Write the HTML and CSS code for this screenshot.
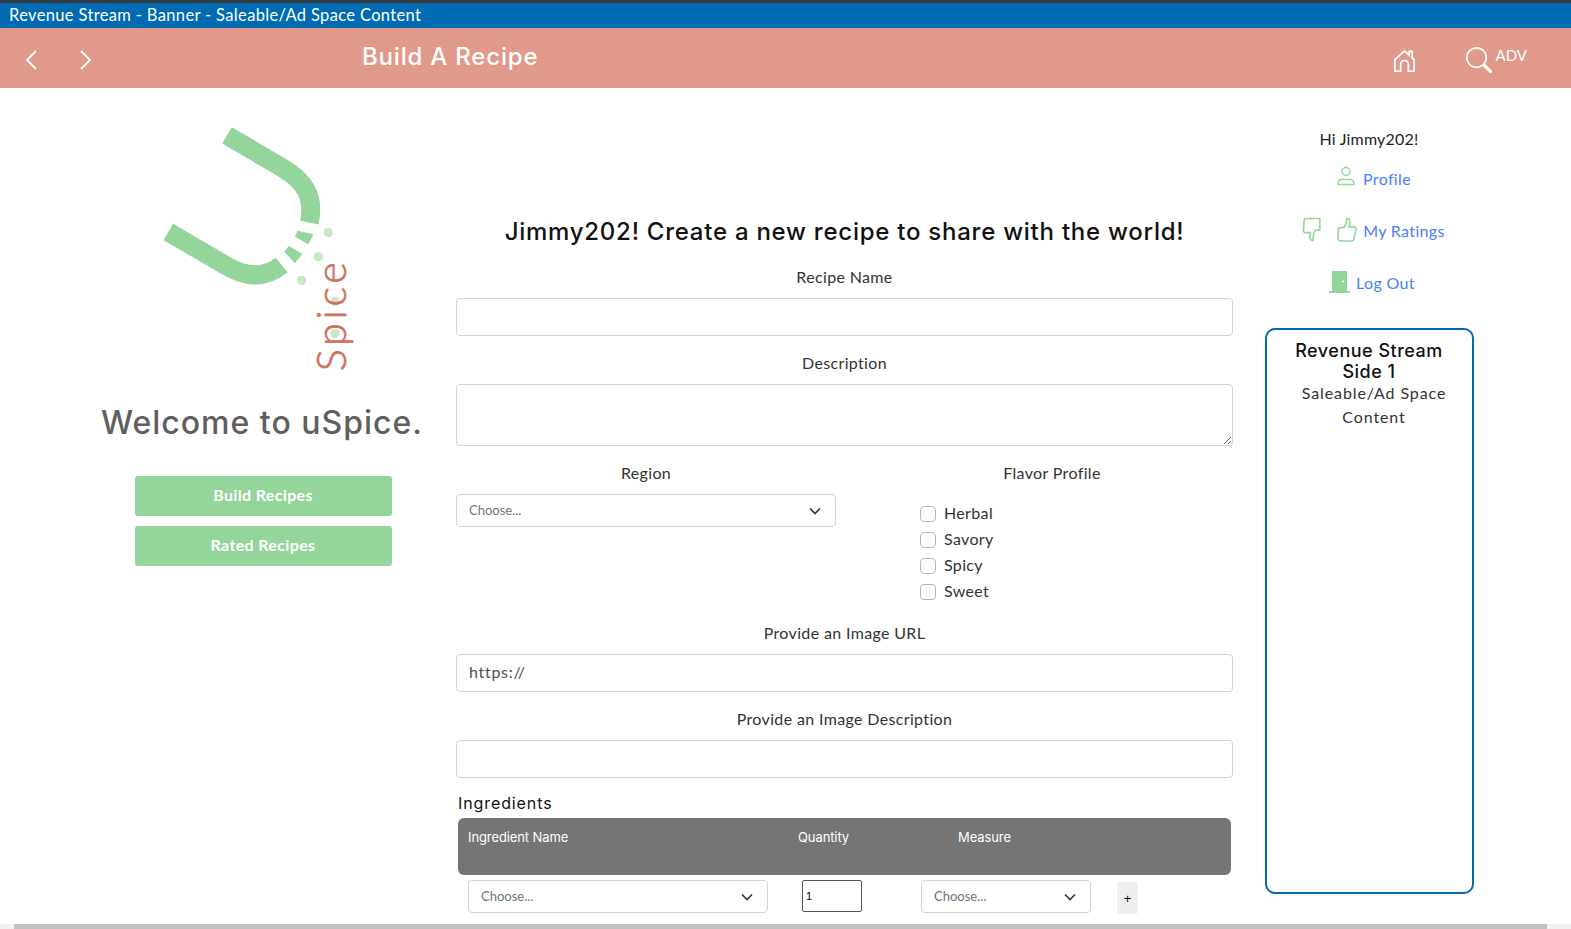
FILE: index.html
```html
<!DOCTYPE html>
<html>
<head>
    <title>Build A Recipe</title>
    <link rel="stylesheet" href="styles.css">
</head>
<body>
    <div class="app">
        <div class="banner">Revenue Stream - Banner - Saleable/Ad Space Content</div>
        <header class="topbar">
            <div class="nav-arrows">
                <svg class="icon-arrow" viewBox="0 0 16 24"><path d="M12 3 3 12l9 9"/></svg>
                <svg class="icon-arrow" viewBox="0 0 16 24"><path d="M4 3l9 9-9 9"/></svg>
            </div>
            <div class="page-title">Build A Recipe</div>
            <svg class="icon-home" viewBox="0 0 24 26"><path d="M2 24V12L12 3l5 4.500V3.500h3v7L22 12v12h-6v-7a4 4 0 0 0-8 0v7z"/></svg>
            <svg class="icon-search" viewBox="0 0 16 16"><path d="M11.742 10.344a6.500 6.500 0 1 0-1.397 1.398h-.001c.03.04.062.078.098.115l3.850 3.850a1 1 0 0 0 1.415-1.414l-3.850-3.850a1.007 1.007 0 0 0-.115-.1zM12 6.500a5.500 5.500 0 1 1-11 0 5.500 5.500 0 0 1 11 0z"/></svg>
            <span class="adv">ADV</span>
        </header>

        <main class="content">
            <section class="left-col">
                <svg class="logo" viewBox="0 0 720 840">
                    <path class="logo-arm" d="M261 76 430 175C490 212 525 255 508 338"/>
                    <path class="logo-arm" d="M85 366 250 462C310 500 370 510 425 465"/>
                    <polygon class="logo-bit" points="472,362 520,373 505,403 465,380"/>
                    <polygon class="logo-bit" points="447,408 487,432 465,460 433,425"/>
                    <circle class="logo-dot" cx="565" cy="368" r="14"/>
                    <circle class="logo-dot" cx="535" cy="440" r="14"/>
                    <circle class="logo-dot" cx="485" cy="511" r="14"/>
                    <circle class="logo-dot" cx="585" cy="574" r="14"/>
                    <circle class="logo-dot" cx="585" cy="670" r="14"/>
                    <text class="logo-text" transform="translate(618 784) rotate(-90)" textLength="328" lengthAdjust="spacing">Spice</text>
                </svg>
                <h2 class="welcome">Welcome to uSpice.</h2>
                <a class="side-btn first">Build Recipes</a>
                <a class="side-btn">Rated Recipes</a>
            </section>

            <section class="form-col">
                <h1 class="form-title">Jimmy202! Create a new recipe to share with the world!</h1>
                <label class="field-label">Recipe Name</label>
                <input class="text-input" type="text">
                <label class="field-label after-input">Description</label>
                <textarea class="text-input text-area"></textarea>

                <div class="split">
                    <div>
                        <label class="field-label">Region</label>
                        <div class="select-box">
                            <select><option>Choose...</option></select>
                            <svg class="chevron" viewBox="0 0 16 16"><path d="M3 5.500l5 5 5-5"/></svg>
                        </div>
                    </div>
                    <div>
                        <label class="field-label">Flavor Profile</label>
                        <div class="checks">
                            <label class="check"><input type="checkbox">Herbal</label>
                            <label class="check"><input type="checkbox">Savory</label>
                            <label class="check"><input type="checkbox">Spicy</label>
                            <label class="check"><input type="checkbox">Sweet</label>
                        </div>
                    </div>
                </div>

                <label class="field-label image-label">Provide an Image URL</label>
                <input class="text-input" type="text" value="https://">
                <label class="field-label after-input">Provide an Image Description</label>
                <input class="text-input" type="text">

                <div class="ingredients-title">Ingredients</div>
                <div class="ingredients-head">
                    <span>Ingredient Name</span>
                    <span>Quantity</span>
                    <span>Measure</span>
                </div>
                <div class="ingredient-row">
                    <div class="select-box name-select">
                        <select><option>Choose...</option></select>
                        <svg class="chevron" viewBox="0 0 16 16"><path d="M3 5.500l5 5 5-5"/></svg>
                    </div>
                    <input class="qty" type="text" value="1">
                    <div class="select-box measure-select">
                        <select><option>Choose...</option></select>
                        <svg class="chevron" viewBox="0 0 16 16"><path d="M3 5.500l5 5 5-5"/></svg>
                    </div>
                    <button class="add-btn">+</button>
                </div>
            </section>

            <aside class="right-col">
                <div class="hello">Hi Jimmy202!</div>
                <div class="user-link profile-link">
                    <svg class="icon-user" viewBox="0 0 20 20"><circle cx="10" cy="5.500" r="4"/><path d="M2 18.500c0-3.500 2-5 4-5h8c2 0 4 1.500 4 5z"/></svg>
                    <a>Profile</a>
                </div>
                <div class="user-link ratings-link">
                    <svg class="icon-thumb down" viewBox="0 0 20 24"><path d="M2 3c0-1 1-2 2-2h13v11h-4l-2 3-.5 7c-2 0-3-1-3-3l.5-4.500H3C1.500 14.500 1 13 1.500 11z"/></svg>
                    <svg class="icon-thumb" viewBox="0 0 20 24"><path d="M2 12c0-1 1-2 2-2l3.500-.5L10 5l.5-4c2 0 3 1.500 2.500 3.500L12.500 9H17c1.500 0 2.500 1 2 2.500l-2 9c-.3 1.500-1 2-2.500 2H6c-2 0-4-1-4-3z"/></svg>
                    <a>My Ratings</a>
                </div>
                <div class="user-link logout-link">
                    <svg class="icon-door" viewBox="0 0 21 22"><path fill-rule="evenodd" d="M3 0h15v20h3v2H0v-2h3zM13 10.500a1 1 0 1 0 2 0 1 1 0 1 0-2 0z"/></svg>
                    <a>Log Out</a>
                </div>
                <div class="ad-box">
                    <div class="ad-title">Revenue Stream Side 1</div>
                    <div class="ad-text">Saleable/Ad Space Content</div>
                </div>
            </aside>
        </main>

        <div class="scrollbar"><div class="scroll-thumb"></div></div>
    </div>
</body>
</html>
```

FILE: styles.css
```css
html, body {
    margin: 0;
    height: 100%;
    overflow: hidden;
}
body {
    font-family: Lato, "Open Sans", sans-serif;
    font-size: 16px;
    letter-spacing: .35px;
    color: #212529;
    background: #fff;
}
.app {
    height: 100%;
    display: flex;
    flex-direction: column;
}

/* top bars */
.banner {
    border-top: 3px solid #343a40;
    background: #006bb3;
    color: #fff;
    height: 25px;
    line-height: 25px;
    padding-left: 9px;
    font-size: 16.500px;
    flex: none;
}
.topbar {
    background: #e0998a;
    color: #fff;
    height: 60px;
    flex: none;
    display: flex;
    align-items: center;
    position: relative;
}
.nav-arrows {
    display: flex;
    gap: 37px;
    margin-left: 24px;
    margin-top: 4px;
}
.icon-arrow {
    width: 16px;
    height: 24px;
    fill: none;
    stroke: #fff;
    stroke-width: 1.800;
}
.page-title {
    font-family: Inter, sans-serif;
    font-weight: 500;
    font-size: 24px;
    letter-spacing: .8px;
    margin-left: 269px;
    margin-top: -4px;
    flex: 1;
}
.icon-home {
    width: 23px;
    height: 25px;
    fill: none;
    stroke: #fff;
    stroke-width: 1.800;
    margin-top: 5px;
}
.icon-search {
    width: 26px;
    height: 26px;
    fill: #fff;
    margin-left: 50px;
    margin-top: 3px;
}
.adv {
    font-size: 15px;
    letter-spacing: 0;
    margin-left: 4px;
    margin-right: 44px;
    margin-top: -6px;
}

/* page columns */
.content {
    flex: 1;
    min-height: 0;
    overflow: hidden;
    display: flex;
}
.left-col {
    width: 386px;
    padding-left: 70px;
    flex: none;
    display: flex;
    flex-direction: column;
    align-items: center;
}
.logo {
    width: 240px;
    height: 280px;
    margin: 22px 0 0 -7px;
}
.logo-arm {
    fill: none;
    stroke: #93d59b;
    stroke-width: 57;
}
.logo-bit {
    fill: #93d59b;
}
.logo-dot {
    fill: #c8e8c8;
}
.logo-text {
    font-family: Lato, sans-serif;
    font-weight: 300;
    font-size: 124px;
    fill: #d0705f;
    stroke: #d0705f;
    stroke-width: 2;
}
.welcome {
    font-family: Inter, sans-serif;
    font-weight: 500;
    font-size: 32px;
    letter-spacing: 1px;
    color: #5f5f5f;
    margin: 13px 0 33px -2px;
    line-height: 40px;
    white-space: nowrap;
}
.side-btn {
    width: 257px;
    height: 40px;
    line-height: 38px;
    background: #93d59b;
    color: #fff;
    font-weight: 700;
    text-align: center;
    border-radius: 3px;
    margin-bottom: 10px;
}

/* form */
.form-col {
    width: 777px;
    flex: none;
    display: flex;
    flex-direction: column;
}
.form-title {
    font-family: Inter, sans-serif;
    font-weight: 500;
    font-size: 24px;
    letter-spacing: .75px;
    line-height: 30px;
    color: #111;
    text-align: center;
    margin: 129px 0 0;
    white-space: nowrap;
}
.field-label {
    display: block;
    text-align: center;
    line-height: 20px;
    margin-top: 20px;
    margin-bottom: 11px;
    color: #333;
}
.after-input {
    margin-top: 17px;
}
.image-label {
    margin-top: 0;
}
.text-input {
    display: block;
    box-sizing: border-box;
    width: 100%;
    height: 38px;
    border: 1px solid #ced4da;
    border-radius: 4px;
    padding: 0 12px 4px;
    font-family: Lato, sans-serif;
    font-size: 16px;
    letter-spacing: .7px;
    color: #495057;
    flex: none;
    margin: 0;
}
.text-area {
    height: 62px;
}
.split {
    display: grid;
    grid-template-columns: 380px 362px;
    column-gap: 35px;
    height: 177px;
}
.split .field-label {
    margin-top: 17px;
    margin-bottom: 11px;
}
.select-box {
    position: relative;
    height: 33px;
}
.select-box select {
    appearance: none;
    display: block;
    width: 100%;
    height: 100%;
    box-sizing: border-box;
    border: 1px solid #ced4da;
    border-radius: 4px;
    background: #fff;
    padding: 0 12px 2px;
    font-family: Lato, sans-serif;
    font-size: 13px;
    letter-spacing: 0;
    color: #6c757d;
}
.chevron {
    position: absolute;
    right: 13px;
    top: 9px;
    width: 16px;
    height: 16px;
    fill: none;
    stroke: #343a40;
    stroke-width: 1.700;
}
.checks {
    margin: 16px 0 0 49px;
}
.check {
    display: flex;
    align-items: center;
    height: 26px;
    color: #333;
}
.check input {
    appearance: none;
    width: 16px;
    height: 16px;
    border: 1px solid #b5b5b5;
    border-radius: 4px;
    margin: 4px 8px 0 0;
}
.ingredients-title {
    font-family: Inter, sans-serif;
    font-size: 16px;
    letter-spacing: .9px;
    line-height: 20px;
    color: #111;
    margin: 15px 0 5px 2px;
}
.ingredients-head {
    height: 57px;
    flex: none;
    box-sizing: border-box;
    margin: 0 2px;
    padding: 11px 0 0 10px;
    background: #757575;
    color: #fff;
    border-radius: 6px;
    font-family: Inter, sans-serif;
    font-size: 13px;
    letter-spacing: -.1px;
    display: grid;
    grid-template-columns: 330px 160px 1fr;
    line-height: 16px;
}
.ingredient-row {
    display: flex;
    align-items: flex-start;
    padding: 5px 0 0 12px;
}
.name-select {
    width: 300px;
}
.measure-select {
    width: 170px;
    margin-left: 59px;
}
.qty {
    box-sizing: border-box;
    width: 60px;
    height: 32px;
    margin-left: 34px;
    border: 1px solid #555;
    border-radius: 2px;
    padding: 0 3px;
    font-size: 11px;
}
.add-btn {
    width: 21px;
    height: 32px;
    margin: 2px 0 0 26px;
    padding: 0;
    border: none;
    border-radius: 3px;
    background: #efefef;
    font-size: 13px;
}

/* right side */
.right-col {
    width: 208px;
    margin-left: 32px;
    flex: none;
    display: flex;
    flex-direction: column;
    align-items: center;
    padding-top: 41px;
}
.hello {
    line-height: 20px;
    letter-spacing: .2px;
    margin-bottom: 19px;
}
.user-link {
    display: flex;
    align-items: center;
    height: 20px;
    margin-bottom: 32px;
}
.user-link a {
    color: #4d7cfe;
}
.profile-link {
    margin-left: 9px;
}
.icon-user {
    width: 20px;
    height: 20px;
    margin: -4px 7px 0 0;
    fill: none;
    stroke: #93d59b;
    stroke-width: 1.500;
}
.ratings-link {
    margin-left: 9px;
}
.icon-thumb {
    width: 21px;
    height: 26px;
    fill: none;
    stroke: #93d59b;
    stroke-width: 1.500;
    margin: 0 6px 0 0;
}
.icon-thumb.down {
    margin-right: 13px;
}
.logout-link {
    margin-left: 6px;
}
.icon-door {
    width: 21px;
    height: 22px;
    fill: #93d59b;
    margin: 0 6px 0 0;
}
.ad-box {
    box-sizing: border-box;
    width: 209px;
    height: 566px;
    margin-top: 4px;
    flex: none;
    border: 2px solid #006bb3;
    border-radius: 10px;
    padding: 10px 16px;
    text-align: center;
}
.ad-title {
    font-family: Inter, sans-serif;
    font-weight: 500;
    font-size: 18px;
    letter-spacing: .5px;
    line-height: 21px;
    color: #111;
}
.ad-text {
    line-height: 24px;
    letter-spacing: .9px;
    margin: -1px -6px 0 4px;
    color: #333;
}

/* bottom page scrollbar */
.scrollbar {
    height: 5px;
    flex: none;
    background: #f1f1f1;
    padding-left: 14px;
    padding-right: 24px;
}
.scroll-thumb {
    height: 100%;
    background: #c1c1c1;
}
```
